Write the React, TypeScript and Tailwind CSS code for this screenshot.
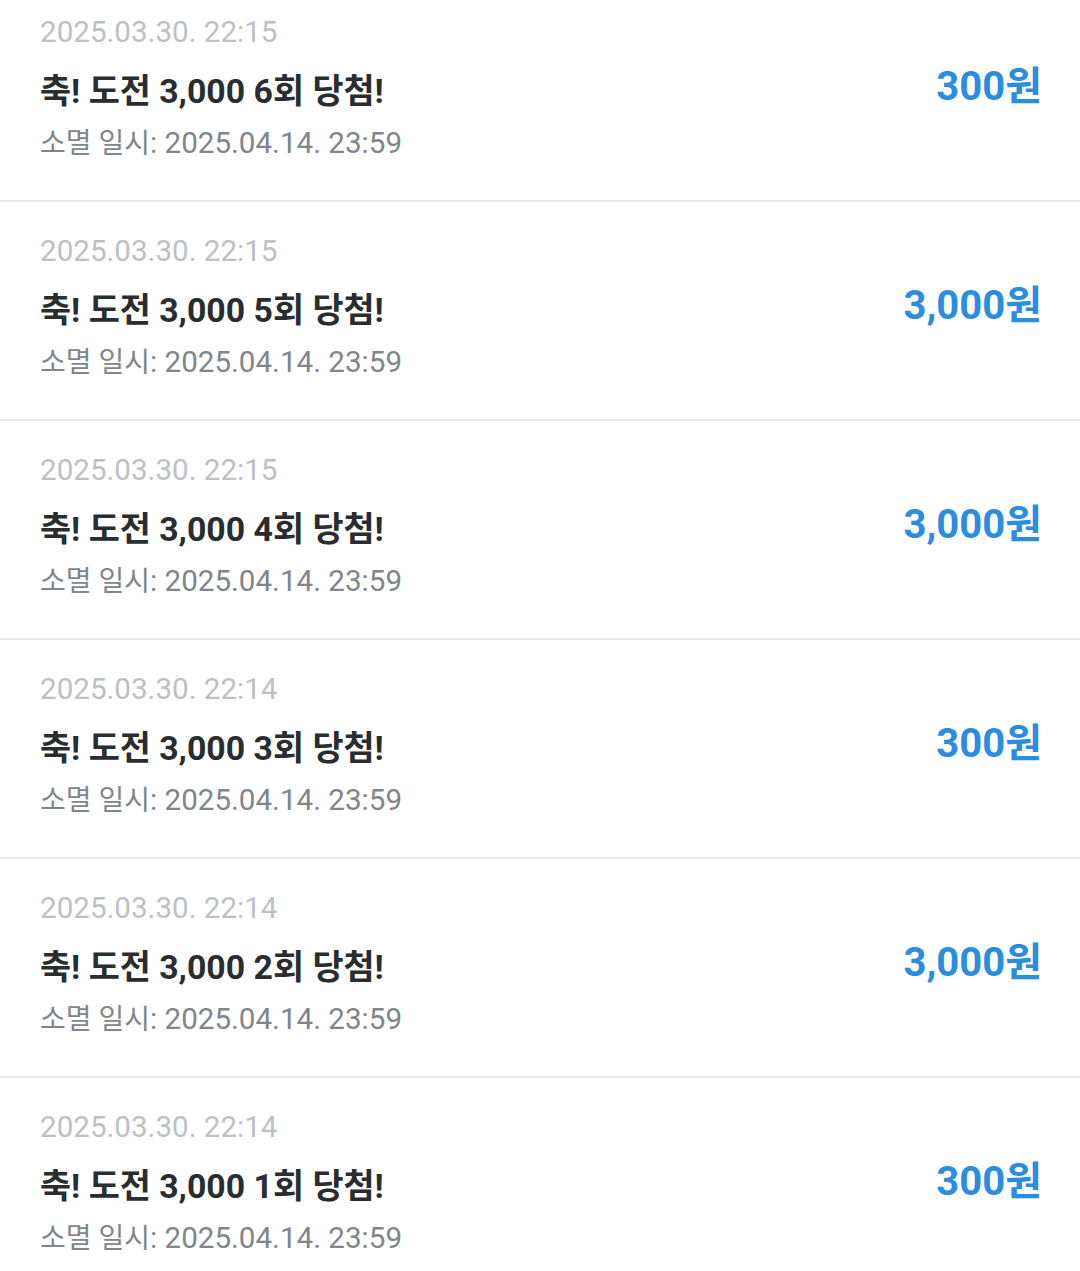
const rows = [
  { date: "2025.03.30. 22:15", round: 6, amount: "300원" },
  { date: "2025.03.30. 22:15", round: 5, amount: "3,000원" },
  { date: "2025.03.30. 22:15", round: 4, amount: "3,000원" },
  { date: "2025.03.30. 22:14", round: 3, amount: "300원" },
  { date: "2025.03.30. 22:14", round: 2, amount: "3,000원" },
  { date: "2025.03.30. 22:14", round: 1, amount: "300원" },
];

export default function App() {
  return (
    <div
      className="min-h-[1271px] w-[1080px] overflow-hidden bg-white"
      style={{ fontFamily: 'Roboto, "Noto Sans CJK KR", sans-serif' }}
    >
      <div className="-mt-[17px]">
        {rows.map((row) => (
          <div
            key={row.round}
            className="flex items-start justify-between border-b-2 border-[#e8e8e8] pl-10 pr-[38px] pt-[27px] pb-[35px]"
          >
            <div className="flex flex-col">
              <div className="text-[29.6px] leading-[44px] text-[#bdc1c5]">
                {row.date}
              </div>
              <div className="mt-[12px] text-[33.8px] font-bold leading-[52px] text-[#2a2d30]">
                축! 도전 3,000 {row.round}회 당첨!
              </div>
              <div className="mt-[3px] h-[44px] text-[29.6px] leading-[44px] text-[#80868b]">
                <span className="text-[28px]">소멸 일시</span>: 2025.04.14. 23:59
              </div>
            </div>
            <div className="pt-[51px] text-[40px] font-bold leading-[52px] text-[#2b8de0]">
              {row.amount}
            </div>
          </div>
        ))}
      </div>
    </div>
  );
}
